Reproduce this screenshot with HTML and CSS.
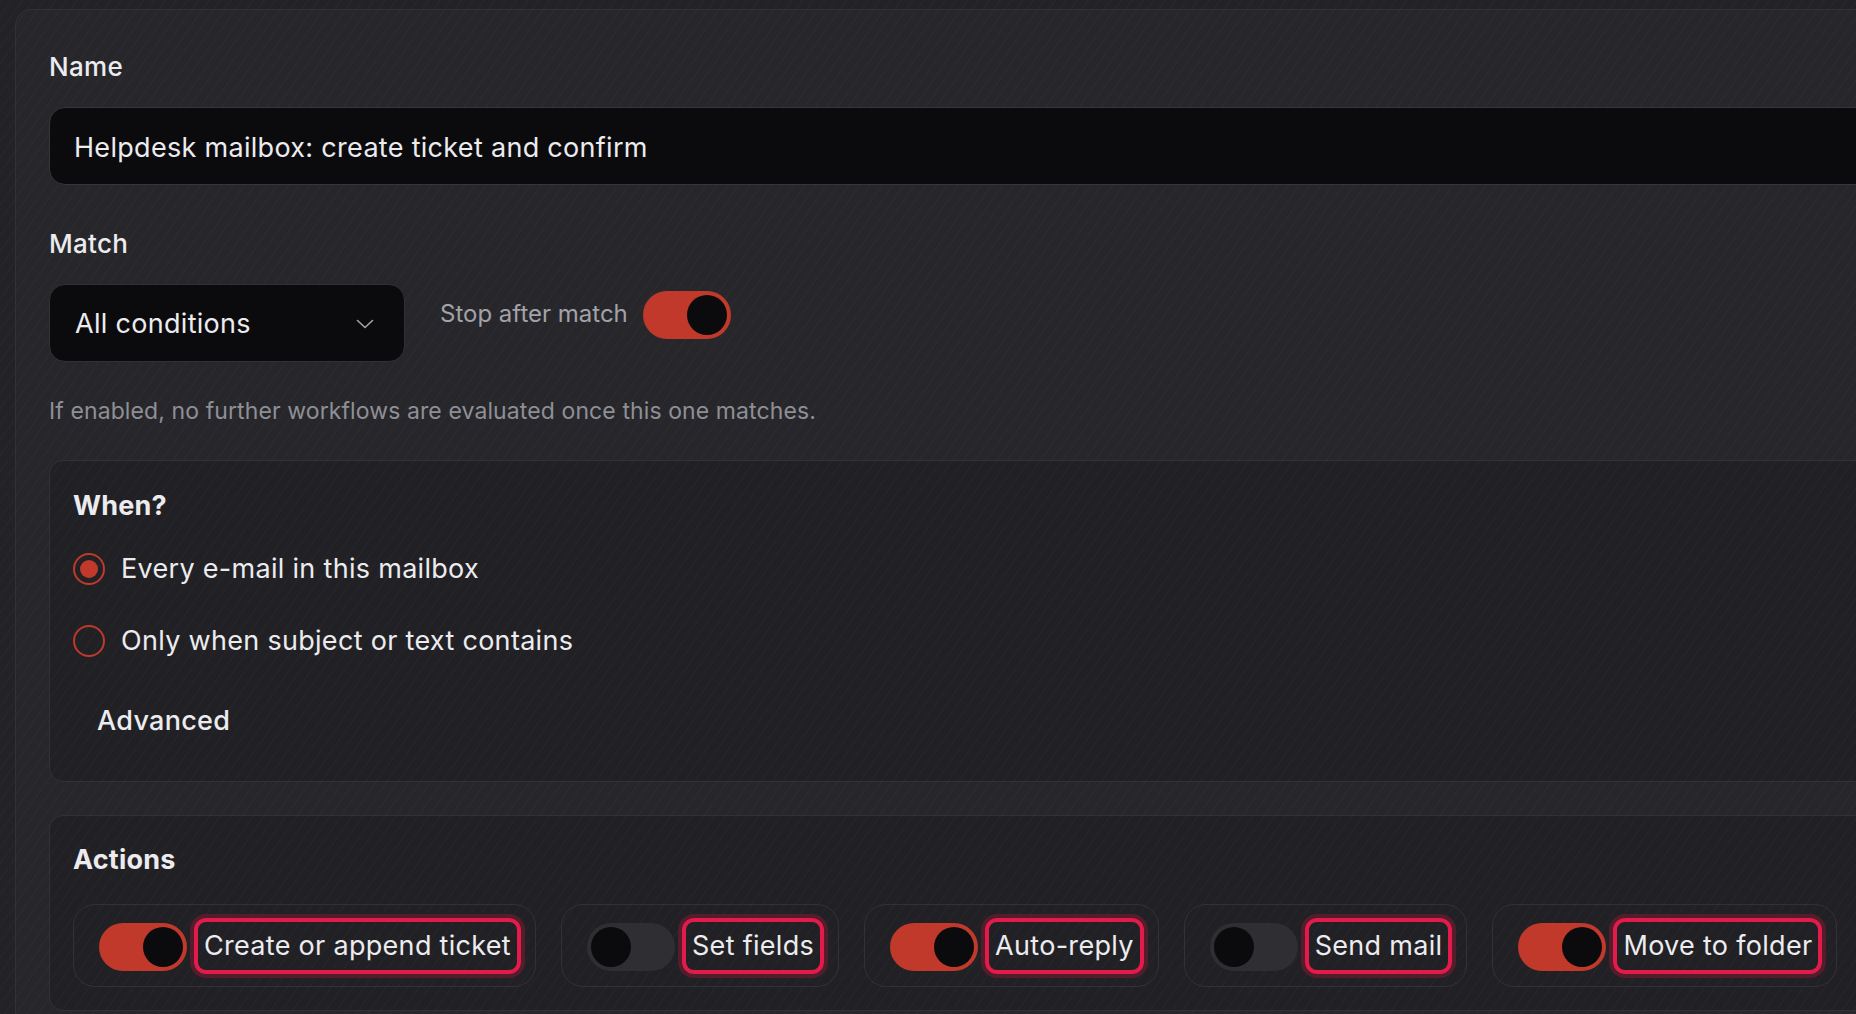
FILE: index.html
```html
<!DOCTYPE html>
<html lang="en">
<head>
<meta charset="utf-8">
<title>Workflow editor</title>
<link rel="stylesheet" href="styles.css">
</head>
<body>
<main class="page">
  <form class="panel">
    <div class="field">
      <label class="field-label" for="wf-name">Name</label>
      <input class="text-input" id="wf-name" type="text" value="Helpdesk mailbox: create ticket and confirm">
    </div>

    <div class="field field-match">
      <span class="field-label">Match</span>
      <div class="match-row">
        <div class="select">
          <span>All conditions</span>
          <svg class="chevron" width="18" height="10" viewBox="0 0 18 10" aria-hidden="true">
            <path d="M1.5 1.5 L9 8.5 L16.5 1.5" fill="none" stroke="#a3a3aa" stroke-width="1.6" stroke-linecap="round" stroke-linejoin="round"/>
          </svg>
        </div>
        <div class="stop-group">
          <span class="stop-label">Stop after match</span>
          <span class="switch on"><span class="knob"></span></span>
        </div>
      </div>
      <p class="hint">If enabled, no further workflows are evaluated once this one matches.</p>
    </div>

    <section class="card card-when">
      <h3 class="card-title">When?</h3>
      <div class="radio-list">
        <div class="radio-row"><span class="radio checked"></span><span>Every e-mail in this mailbox</span></div>
        <div class="radio-row"><span class="radio"></span><span>Only when subject or text contains</span></div>
      </div>
      <div class="advanced">Advanced</div>
    </section>

    <section class="card card-actions">
      <h3 class="card-title">Actions</h3>
      <div class="chips">
        <div class="chip"><span class="switch on"><span class="knob"></span></span><span class="chip-label">Create or append ticket</span></div>
        <div class="chip"><span class="switch"><span class="knob"></span></span><span class="chip-label">Set fields</span></div>
        <div class="chip"><span class="switch on"><span class="knob"></span></span><span class="chip-label">Auto-reply</span></div>
        <div class="chip"><span class="switch"><span class="knob"></span></span><span class="chip-label">Send mail</span></div>
        <div class="chip"><span class="switch on"><span class="knob"></span></span><span class="chip-label">Move to folder</span></div>
      </div>
    </section>
  </form>
</main>
</body>
</html>
```

FILE: styles.css
```css
* { box-sizing: border-box; }

html, body {
  margin: 0;
  height: 100%;
}

body {
  overflow: hidden;
  font-family: Inter, "Noto Sans", "Liberation Sans", sans-serif;
  color: #ececef;
  background-color: #232327;
  background-image: repeating-linear-gradient(125deg, rgba(255,255,255,0.022) 0 1px, transparent 1px 9px);
}

.page {
  padding: 9px 0 0 15px;
}

/* outer editor panel, wider than the window */
.panel {
  width: 2100px;
  min-height: 1100px;
  padding: 41px 33px;
  border: 1px solid #313136;
  border-radius: 16px;
  background-color: rgba(255,255,255,0.018);
}

.field {
  display: flex;
  flex-direction: column;
}

.field-label {
  font-size: 26px;
  line-height: 32px;
  font-weight: 500;
  letter-spacing: 0.3px;
  color: #ececef;
  margin-bottom: 24px;
}

.field-match {
  margin-top: 43px;
}

.text-input {
  height: 78px;
  width: 100%;
  padding: 2px 0 0 24px;
  border: 1px solid #35353b;
  border-radius: 16px;
  background: #0b0b0e;
  color: #ececef;
  font-family: inherit;
  font-size: 27px;
  letter-spacing: 0.3px;
  line-height: 32px;
  outline: none;
}

.match-row {
  display: flex;
  align-items: flex-start;
  gap: 35px;
}

.select {
  width: 356px;
  height: 78px;
  display: flex;
  align-items: center;
  justify-content: space-between;
  padding: 2px 30px 0 25px;
  border: 1px solid #303036;
  border-radius: 16px;
  background: #0b0b0e;
  font-size: 27px;
  letter-spacing: 0.3px;
  line-height: 32px;
  color: #ececef;
}

.chevron { margin-top: 0; }

.stop-group {
  display: flex;
  align-items: center;
  gap: 15px;
  margin-top: 7px;
}

.stop-label {
  font-size: 24px;
  line-height: 32px;
  color: #a2a2a8;
  margin-top: -2px;
}

/* toggle switch */
.switch {
  flex: none;
  width: 88px;
  height: 48px;
  padding: 4px;
  border-radius: 24px;
  background: #2e2e33;
  display: flex;
  justify-content: flex-start;
}
.switch.on {
  background: #c0392b;
  justify-content: flex-end;
}
.knob {
  width: 40px;
  height: 40px;
  border-radius: 50%;
  background: #0b0b0d;
}

.hint {
  margin: 35px 0 0;
  font-size: 23px;
  letter-spacing: 0.1px;
  line-height: 28px;
  color: #8f8f96;
}

/* inner cards */
.card {
  margin-top: 35px;
  padding: 29px 23px 36px;
  border: 1px solid #313137;
  border-radius: 14px;
  background-color: rgba(0,0,0,0.13);
}

.card-title {
  margin: 0 0 23px;
  font-size: 27px;
  line-height: 32px;
  font-weight: 700;
  letter-spacing: 0.2px;
  color: #ececef;
}

.radio-list {
  display: flex;
  flex-direction: column;
  gap: 24px;
}

.radio-row {
  height: 48px;
  display: flex;
  align-items: center;
  gap: 16px;
  font-size: 27px;
  letter-spacing: 0.3px;
  line-height: 32px;
  color: #ececef;
}

.radio {
  width: 32px;
  height: 32px;
  border-radius: 50%;
  border: 2px solid #c0392b;
  display: flex;
  align-items: center;
  justify-content: center;
  flex: none;
}
.radio.checked::after {
  content: "";
  width: 18px;
  height: 18px;
  border-radius: 50%;
  background: #c0392b;
}

.advanced {
  margin-top: 32px;
  display: inline-block;
  padding: 8px 24px;
  font-size: 27px;
  letter-spacing: 0.3px;
  line-height: 32px;
  font-weight: 500;
  color: #ececef;
}

.card-actions {
  margin-top: 33px;
  padding: 28px 23px 23px;
}
.card-actions .card-title { margin-bottom: 28px; }

.chips {
  display: flex;
  gap: 25px;
}

.chip {
  height: 83px;
  display: flex;
  align-items: center;
  gap: 7px;
  padding: 0 14px 0 25px;
  border: 1px solid #313137;
  border-radius: 22px;
}

.chip .switch { margin-top: 3px; }

.chip-label {
  height: 56px;
  padding: 0 6px;
  border: 4px solid #e31b4b;
  border-radius: 12px;
  box-shadow: 0 0 0 4px #541d2b;
  font-size: 27px;
  letter-spacing: 0.3px;
  line-height: 48px;
  color: #ececef;
  white-space: nowrap;
}
```
